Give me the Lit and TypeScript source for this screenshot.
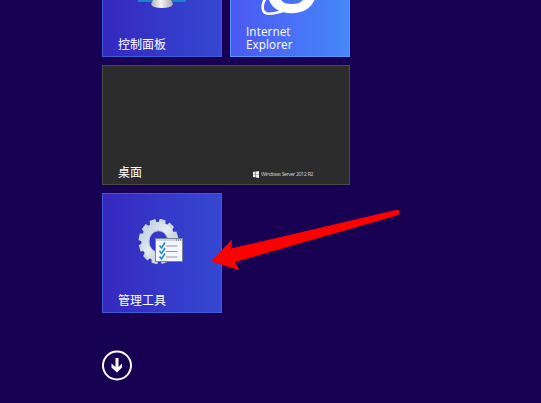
import { LitElement, html, css, svg } from "lit";
import { customElement } from "lit/decorators.js";

const teeth = Array.from({ length: 12 }, (_, i) => i * 30 + 12);

@customElement("app-root")
export class AppRoot extends LitElement {
  static styles = css`
    :host {
      display: block;
      position: relative;
      width: 541px;
      height: 403px;
      overflow: hidden;
      background: #180052;
      color: #fff;
      font-family: "Open Sans", "Noto Sans CJK SC", sans-serif;
      font-size: 12px;
    }
    .screen {
      height: 403px;
      box-sizing: border-box;
      padding-left: 102px;
      display: flex;
      flex-direction: column;
      align-items: flex-start;
    }
    .tiles {
      display: grid;
      grid-template-columns: 120px 120px;
      grid-template-rows: 57px 120px 120px;
      gap: 8px;
    }
    .tile {
      box-sizing: border-box;
      display: grid;
      border: 1px solid #3b5bd6;
      background: linear-gradient(90deg, #3528be, #3448d2);
      overflow: hidden;
    }
    .tile > * {
      grid-area: 1 / 1;
    }
    .cut {
      border-top: 0;
    }
    .ie {
      background: linear-gradient(90deg, #4c58f2, #4588fa);
      border-color: #5795fa;
    }
    .desktop {
      grid-column: 1 / 3;
      background: #2c2c2c;
      border-color: #4a4a4a;
    }
    .label {
      align-self: end;
      padding: 0 0 3px 15px;
      line-height: 16px;
      font-weight: 400;
    }
    .ie .label {
      display: flex;
      flex-direction: column;
      padding-bottom: 5px;
      font-size: 11.7px;
      font-weight: 500;
      letter-spacing: 0.1px;
      line-height: 13px;
    }
    .art {
      display: block;
    }
    .brand {
      align-self: end;
      justify-self: end;
      display: flex;
      align-items: center;
      gap: 2px;
      width: 96px;
      height: 9px;
      margin-bottom: 5px;
      font-size: 5.4px;
      letter-spacing: -0.5px;
      word-spacing: 0.3px;
      line-height: 9px;
      color: #d4d4d4;
      white-space: nowrap;
    }
    .more {
      margin-top: 37px;
      display: block;
    }
    .pointer {
      position: absolute;
      left: 0;
      top: 0;
    }
  `;

  render() {
    return html`
      <main class="screen">
        <div class="tiles">
          <div class="tile cut">
            <svg class="art" width="118" height="56" viewBox="103 0 118 56">
              <defs>
                <linearGradient id="stand">
                  <stop offset="0" stop-color="#aeb0b4" />
                  <stop offset=".45" stop-color="#f5f5f4" />
                  <stop offset="1" stop-color="#a9a9ae" />
                </linearGradient>
              </defs>
              <path d="M138 0H186V2H138Z" fill="#1685c4" />
              <path d="M153 0H171L173 4Q172 8 162 8T151 4Z" fill="url(#stand)" />
            </svg>
            <div class="label">控制面板</div>
          </div>
          <div class="tile ie cut">
            <svg class="art" width="118" height="56" viewBox="231 0 118 56">
              <path
                d="M269 0C272 8 280 13.300 291.500 13.300C303 13.300 311 8 314.500 0H303C300 3 297 4 292 4C287 4 283.500 3 281 0Z"
                fill="#fff"
              />
              <path
                d="M265.500 -2C261.500 5 261 13.500 268.500 13.700C274 13.700 279 12.500 285 10"
                fill="none"
                stroke="#fff"
                stroke-width="2.6"
              />
            </svg>
            <div class="label"><span>Internet</span><span>Explorer</span></div>
          </div>
          <div class="tile desktop">
            <div class="label">桌面</div>
            <div class="brand">
              <svg width="6" height="7" viewBox="0 0 6 7">
                <path d="M0 1L2.6.6V3.2H0ZM3 .5L6 0V3.2H3ZM0 3.6H2.6V6.3L0 5.9ZM3 3.6H6V7L3 6.4Z" fill="#eee" />
              </svg>
              <span>Windows Server 2012 R2</span>
            </div>
          </div>
          <div class="tile">
            <svg class="art" width="118" height="118" viewBox="103 194 118 118">
              <defs>
                <linearGradient id="steel" x1="0" y1="0" x2="1" y2="1">
                  <stop offset="0" stop-color="#bed2e3" />
                  <stop offset=".45" stop-color="#e6ebf0" />
                  <stop offset="1" stop-color="#b3c1ce" />
                </linearGradient>
              </defs>
              <g transform="translate(158.500 241.500) scale(.88 1)">
                ${teeth.map(
                  (a) => svg`<path d="M-4.500 -16L-3.300 -22.500H3.300L4.500 -16Z" fill="#cbd8e3" transform="rotate(${a})" />`
                )}
                <circle r="15" fill="none" stroke="url(#steel)" stroke-width="9" />
                <circle r="10.800" fill="none" stroke="#9db5cf" stroke-width="1" />
              </g>
              <path d="M155.500 238.500H182.500V261.500H155.500Z" fill="#f5f6fa" stroke="#77869b" />
              <path d="M156 239H182V241H156Z" fill="#cbd2dc" />
              <path d="M176 240H177M178 240H179M180 240H181" stroke="#566579" />
              <path d="M166 246H177.500M166 251.500H177.500M166 257H177.500" stroke="#9590b5" stroke-width="1.2" />
              <path
                d="M159.500 245.500L161.500 248L165 242.500M159.500 251L161.500 253.500L165 248M159.500 256.500L161.500 259L165 253.500"
                fill="none"
                stroke="#188dce"
                stroke-width="1.6"
              />
            </svg>
            <div class="label">管理工具</div>
          </div>
        </div>
        <svg class="more" width="30" height="31" viewBox="102 350 30 31">
          <circle cx="117" cy="365.5" r="14" fill="none" stroke="#fff" stroke-width="2" />
          <path d="M115.500 358H118.500V367L122 363.500V367.500L117 372.500L111.500 367.500V363.500L115.500 367Z" fill="#fff" />
        </svg>
      </main>
      <svg class="pointer" width="541" height="403" viewBox="0 0 541 403">
        <path
          d="M211 261.3L232 239.5L231 248.5L396 210Q399 209.500 399.800 212Q400 214.500 397.500 215.300L235 262L239.500 270.300Z"
          fill="#f00"
        />
      </svg>
    `;
  }
}
